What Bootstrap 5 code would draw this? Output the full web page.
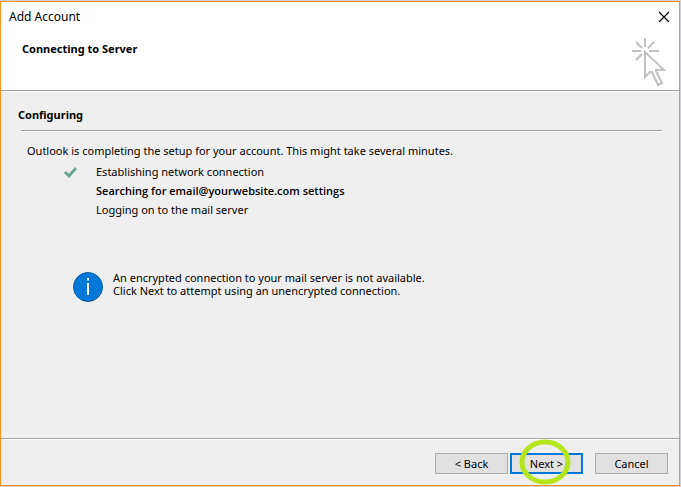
<!DOCTYPE html>
<html lang="en">
<head>
<meta charset="utf-8">
<meta name="viewport" content="width=device-width, initial-scale=1">
<title>Add Account</title>
<link href="https://cdn.jsdelivr.net/npm/bootstrap@5.3.0/dist/css/bootstrap.min.css" rel="stylesheet">
<style>
body { background: #cfcfd4; padding: 1px 1px 1px 0; font-family: "Noto Sans", "Open Sans", sans-serif; font-size: 11px; line-height: 13px; color: #000; }
.wizard { border: 1px solid #f7941d; background: #efefef; }
.wizard-head { background: #fff; height: 88px; }
.title-bar { padding: 5px 5px 0 8px; }
.window-title { font-size: 12px; line-height: 20px; font-weight: 400; }
.close-button { width: 20px; height: 20px; }
.step-title, .section-title { font-size: 11px; line-height: 14px; font-weight: 700; }
.step-title { padding: 15px 0 0 21px; }
.head-row { padding-right: 12px; }
.wand { margin-top: 8px; }
.rule { height: 2px; background: #a0a0a0; border-bottom: 1px solid #fff; }
.section-title { padding: 16px 17px 0; }
.section-rule { margin: 8px 17px 0 20px; }
.intro { padding: 12px 26px 0; }
.task-list { padding: 5px 26px 0 62px; }
.task-list li { height: 19px; line-height: 19px; }
.task-current { font-family: "Open Sans", "Noto Sans", sans-serif; font-weight: 600; }
.task-icon { width: 33px; }
.notice { padding: 52px 26px 0 71px; gap: 9px; }
.wizard-foot { padding: 13px 11px 11px; }
.wizard-foot .btn { width: 73px; height: 21px; padding: 0; font-size: 11px; line-height: 19px; color: #000; background: #e1e1e1; border: 1px solid #adadad; }
.wizard-foot .btn-default { border: 2px solid #0078d7; line-height: 17px; }
.next-wrap { margin: 0 12px 0 2px; }
.highlight { left: 9px; top: -14px; pointer-events: none; }
</style>
</head>
<body class="vh-100 d-flex flex-column">
<main class="wizard flex-grow-1 d-flex flex-column">
  <header class="wizard-head">
    <div class="title-bar d-flex justify-content-between">
      <h1 class="window-title m-0">Add Account</h1>
      <button type="button" class="close-button btn p-0 border-0 d-flex align-items-center justify-content-center" aria-label="Close">
        <svg width="12" height="12" viewBox="0 0 12 12" fill="none" stroke="#000" stroke-width="1.1"><path d="M1 1l10 10M11 1L1 11"/></svg>
      </button>
    </div>
    <div class="head-row d-flex justify-content-between">
      <h2 class="step-title m-0">Connecting to Server</h2>
      <svg class="wand" width="36" height="52" viewBox="0 0 36 52" fill="none" stroke="#c0c0c0" stroke-width="2">
        <path d="M14 3v9M1 16h9M18 16h10M5 7l6 6M23 7l-6 6M5 25l6-6"/>
        <path d="M14 17v25l5-5h2l6 13 4-2-6-12v-1h8z"/>
      </svg>
    </div>
  </header>
  <div class="rule"></div>
  <section class="flex-grow-1">
    <h3 class="section-title m-0">Configuring</h3>
    <div class="rule section-rule"></div>
    <p class="intro m-0">Outlook is completing the setup for your account. This might take several minutes.</p>
    <ul class="task-list list-unstyled m-0">
      <li class="d-flex"><span class="task-icon d-flex align-items-center"><svg width="15" height="12" viewBox="0 0 15 12" fill="none" stroke="#6aa391" stroke-width="2.800"><path d="M2 6l4 4 7-8"/></svg></span>Establishing network connection</li>
      <li class="d-flex task-current"><span class="task-icon"></span>Searching for email@yourwebsite.com settings</li>
      <li class="d-flex"><span class="task-icon"></span>Logging on to the mail server</li>
    </ul>
    <div class="notice d-flex">
      <svg width="32" height="32" viewBox="0 0 32 32"><circle cx="16" cy="16" r="14.500" fill="#0078d7" stroke="#0a5a9e"/><path d="M15 12h2v12h-2zM15 7h2v2.500h-2z" fill="#fff"/></svg>
      <p class="m-0">An encrypted connection to your mail server is not available.<br>Click Next to attempt using an unencrypted connection.</p>
    </div>
  </section>
  <div class="rule"></div>
  <footer class="wizard-foot d-flex justify-content-end">
    <button type="button" class="btn rounded-0">&lt; Back</button>
    <div class="next-wrap position-relative">
      <button type="button" class="btn btn-default rounded-0">Next &gt;</button>
      <svg class="highlight position-absolute" width="52" height="46" viewBox="0 0 52 46" fill="none" stroke="#b5e61d" stroke-width="5"><ellipse cx="26" cy="23" rx="23" ry="20"/></svg>
    </div>
    <button type="button" class="btn rounded-0">Cancel</button>
  </footer>
</main>
<script src="https://cdn.jsdelivr.net/npm/bootstrap@5.3.0/dist/js/bootstrap.bundle.min.js"></script>
</body>
</html>
